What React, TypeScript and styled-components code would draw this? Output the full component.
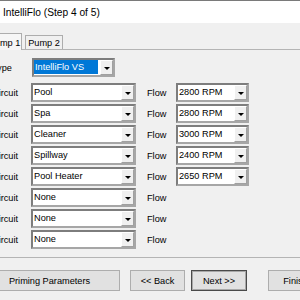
import React from 'react';
import styled, { createGlobalStyle } from 'styled-components';

const GlobalStyle = createGlobalStyle`
  html, body {
    margin: 0;
    padding: 0;
    width: 300px;
    height: 300px;
    overflow: hidden;
    background: #f0f0f0;
  }
  body {
    font-family: "Liberation Sans", Arial, sans-serif;
    font-size: 9.2px;
    color: #000;
  }
`;

const circuits = [
  { name: 'Pool', flow: '2800 RPM' },
  { name: 'Spa', flow: '2800 RPM' },
  { name: 'Cleaner', flow: '3000 RPM' },
  { name: 'Spillway', flow: '2400 RPM' },
  { name: 'Pool Heater', flow: '2650 RPM' },
  { name: 'None' },
  { name: 'None' },
  { name: 'None' },
];

type ComboProps = { width: number; value: string; selected?: boolean };

const Combo = ({ width, value, selected }: ComboProps) => (
  <ComboBox $width={width}>
    <ComboText $selected={selected}>{value}</ComboText>
    <ComboButton>
      <Arrow />
    </ComboButton>
  </ComboBox>
);

const App = () => {
  return (
    <>
      <GlobalStyle />
      <Window>
        <TitleBar>
          <Title>IntelliFlo (Step 4 of 5)</Title>
        </TitleBar>
        <TabStrip>
          <Tab $active>Pump 1</Tab>
          <Tab>Pump 2</Tab>
        </TabStrip>
        <Panel>
          <TypeRow>
            <Label>Type</Label>
            <Combo width={83} value="IntelliFlo VS" selected />
          </TypeRow>
          <CircuitList>
            {circuits.map((c, i) => (
              <CircuitRow key={i}>
                <Label>Circuit</Label>
                <Combo width={105} value={c.name} />
                <FlowLabel>Flow</FlowLabel>
                {c.flow && <Combo width={73} value={c.flow} />}
              </CircuitRow>
            ))}
          </CircuitList>
        </Panel>
        <Footer>
          <Button $width={141}>Priming Parameters</Button>
          <NavGroup>
            <Button $width={55}>&lt;&lt; Back</Button>
            <Button $width={56} $default>Next &gt;&gt;</Button>
          </NavGroup>
          <Button $width={55}>Finish</Button>
        </Footer>
      </Window>
    </>
  );
};

export default App;

const Window = styled.div`
  margin-left: -24px;
  width: 360px;
  height: 300px;
  background: #f0f0f0;
`;

const TitleBar = styled.div`
  height: 22px;
  border-top: 1px solid #7a7a7a;
  background: #fff;
  display: flex;
  align-items: center;
  padding-left: 27px;
`;

const Title = styled.span`
  font-size: 10.2px;
  padding-top: 1px;
`;

const TabStrip = styled.div`
  display: flex;
  align-items: flex-end;
  gap: 3px;
  margin-top: 10px;
  padding-left: 11px;
  position: relative;
  z-index: 1;
`;

const Tab = styled.div<{ $active?: boolean }>`
  box-sizing: border-box;
  width: ${(p) => (p.$active ? 35 : 38)}px;
  height: ${(p) => (p.$active ? 17 : 14)}px;
  margin-bottom: ${(p) => (p.$active ? -1 : 0)}px;
  border: 1px solid #adadad;
  border-bottom: none;
  background: ${(p) => (p.$active ? '#f6f6f6' : '#f0f0f0')};
  display: flex;
  align-items: center;
  justify-content: center;
  padding-top: ${(p) => (p.$active ? 1 : 0)}px;
`;

const Panel = styled.div`
  box-sizing: border-box;
  margin-left: 9px;
  height: 209px;
  border: 1px solid #b4b4b4;
  padding: 8px 0 0 6px;
`;

const Label = styled.span`
  white-space: nowrap;
`;

const TypeRow = styled.div`
  display: grid;
  grid-template-columns: 40px auto;
  align-items: center;
  height: 19px;
`;

const CircuitList = styled.div`
  display: flex;
  flex-direction: column;
  gap: 2px;
  margin-top: 6px;
`;

const CircuitRow = styled.div`
  display: grid;
  grid-template-columns: 39px 116px 29px 73px;
  align-items: center;
  height: 19px;
`;

const FlowLabel = styled.span`
  padding-top: 1px;
`;

const ComboBox = styled.div<{ $width: number }>`
  box-sizing: border-box;
  width: ${(p) => p.$width}px;
  height: 19px;
  background: #fff;
  border: 2px solid;
  border-color: #7d7d7d #a6a6a6 #a6a6a6 #7d7d7d;
  display: flex;
  align-items: stretch;
`;

const ComboText = styled.span<{ $selected?: boolean }>`
  flex: 1;
  display: flex;
  align-items: center;
  padding-left: 1px;
  margin: 0 2px 1px 0;
  white-space: nowrap;
  overflow: hidden;
  background: ${(p) => (p.$selected ? '#0078d7' : 'transparent')};
  color: ${(p) => (p.$selected ? '#fff' : '#000')};
`;

const ComboButton = styled.span`
  box-sizing: border-box;
  width: 13px;
  margin: 0 0 0 0;
  background: #f0f0f0;
  border: 1px solid;
  border-color: #fff #a0a0a0 #a0a0a0 #fff;
  display: flex;
  align-items: center;
  justify-content: center;
`;

const Arrow = styled.span`
  width: 0;
  height: 0;
  border-left: 3px solid transparent;
  border-right: 3px solid transparent;
  border-top: 3px solid #000;
  margin-top: 1px;
`;

const Footer = styled.div`
  display: flex;
  align-items: center;
  gap: 10px;
  padding-left: 3px;
  margin-top: 12px;
`;

const NavGroup = styled.div`
  display: flex;
  gap: 6px;
  margin-right: 11px;
`;

const Button = styled.button<{ $width: number; $default?: boolean }>`
  box-sizing: border-box;
  width: ${(p) => p.$width}px;
  height: 21px;
  padding: 0;
  font-family: "Liberation Sans", Arial, sans-serif;
  font-size: 9.2px;
  color: #000;
  background: #e1e1e1;
  border: 1px solid ${(p) => (p.$default ? '#4a4a4a' : '#adadad')};
  box-shadow: ${(p) => (p.$default ? 'inset 0 0 0 1px #a8a8a8' : 'none')};
  flex-shrink: 0;
`;
